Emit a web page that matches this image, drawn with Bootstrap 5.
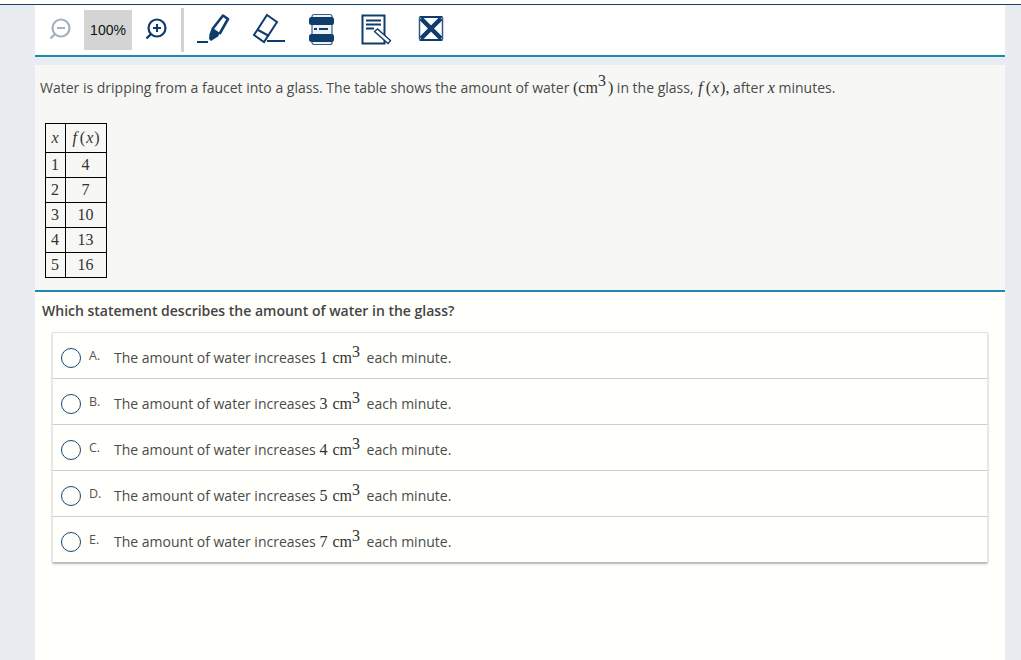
<!DOCTYPE html>
<html lang="en">
<head>
<meta charset="utf-8">
<title>Question</title>
<link rel="stylesheet" href="https://cdn.jsdelivr.net/npm/bootstrap@5.3.0/dist/css/bootstrap.min.css">
<style>
html,body{height:100%;overflow:hidden}
body{background:#e9ecf0;font-family:"Open Sans","Noto Sans",sans-serif;font-size:14px;color:#4a4a4a}
.topstrip{height:5px;background:#fff;border-bottom:1px solid #1d3f62}
.sheet{width:970px;margin-left:35px;height:655px;background:#fffffb}
.toolbar{height:52px;border-bottom:2px solid #1c8bb0;background:#fff;padding-left:12px}
.toolbar svg{flex:none}
.t-zoomval{width:48px;height:40px;margin-left:11px;background:#d4d4d4;color:#111;font-size:14px;font-family:"Liberation Sans",sans-serif}
.t-plus{margin-left:11px}
.sep{width:3px;height:44px;background:#d2d2d2;margin-left:12px}
.t-pen{margin-left:11px}
.t-eraser{margin-left:21px}
.t-reader{margin-left:18px}
.t-notes{margin-left:22px}
.t-close{margin-left:22px}
.gapband{height:8px;background:#e9ecf0}
.passage{height:227px;background:#f7f8f5;border-bottom:2px solid #1c8bb0;padding:13px 5px 0}
.passage p{margin:0;line-height:20px;white-space:nowrap}
.m{font-family:"Liberation Serif",serif;color:#333;font-size:16px}
.m sup{font-size:16px;top:-.375em;line-height:0;vertical-align:baseline;position:relative}
.passage .m sup{top:-.45em}
.fn{padding-left:1px;padding-right:3px}
.vr-x{padding:0 1px}
.after-sup{margin-left:2px}
.ans-math{margin-right:3px;word-spacing:1px}
.ftable{border-collapse:collapse;margin:25px 0 0 5px;font-family:"Liberation Serif",serif;font-size:16px;color:#333}
.ftable td{border:1px solid #000;text-align:center;height:25px;padding:0 1px 0 0;line-height:20px}
.ftable tr:first-child td{height:29px}
.ftable .c1{width:20px}
.ftable .c2{width:41px}
.question{font-weight:600;color:#444;padding:9px 0 0 7px;line-height:20px;margin:0}
.answers{margin:11px 17px 0;border-radius:2px;box-shadow:0 1px 2px rgba(0,0,0,.3)}
.answers .list-group-item{height:46px;padding:5px 0 0 8px;background:#fffffb;border-color:#e4e4e0;border-bottom-width:0;color:#4a4a4a;border-radius:0}
.answers .list-group-item + .list-group-item{border-top:1px solid #cfcfca}
.answers .list-group-item:last-child{height:47px;border-bottom:1px solid #bdbdb8}
.radio{width:20px;height:20px;border:1.5px solid #14477a;border-radius:50%;flex:none}
.letter{width:25px;margin-left:8px;font-size:12.5px;margin-top:-4px;color:#555}
</style>
</head>
<body>
<div class="topstrip"></div>
<div class="sheet">
  <div class="toolbar d-flex align-items-center">
    <svg width="26" height="26" viewBox="0 0 26 26" fill="none" aria-label="Zoom out"><circle cx="14" cy="11" r="8.500" stroke="#a3b3bb" stroke-width="2.200"/><path d="M10 11h8" stroke="#a3b3bb" stroke-width="2"/><path d="M8 17l-4.500 4.500" stroke="#a3b3bb" stroke-width="2.400"/></svg>
    <div class="t-zoomval d-flex align-items-center justify-content-center">100%</div>
    <svg class="t-plus" width="26" height="26" viewBox="0 0 26 26" fill="none" aria-label="Zoom in"><circle cx="14" cy="11" r="8.500" stroke="#0f3d6b" stroke-width="2.200"/><path d="M10 11h8M14 7v8" stroke="#0f3d6b" stroke-width="2"/><path d="M8 17l-4.500 4.500" stroke="#0f3d6b" stroke-width="2.400"/></svg>
    <div class="sep"></div>
    <svg class="t-pen" width="36" height="36" viewBox="0 0 36 36" fill="none" aria-label="Highlighter"><path d="M2 30h11" stroke="#0f3d6b" stroke-width="2"/><path d="M17 15.500l8 5.500-2 3.500-7 4.500-2-2 .5-5z" fill="#0f3d6b"/><path d="M17.500 17L28 3.500l5 3.500-8.500 15" stroke="#0f3d6b" stroke-width="2.600" stroke-linejoin="round"/></svg>
    <svg class="t-eraser" width="36" height="36" viewBox="0 0 36 36" fill="none" aria-label="Eraser"><path d="M15 3l10 7-13 20-10-7z" stroke="#0f3d6b" stroke-width="2"/><path d="M6 18l11 6" stroke="#0f3d6b" stroke-width="2"/><path d="M15 29h18" stroke="#0f3d6b" stroke-width="2"/></svg>
    <svg class="t-reader" width="32" height="36" viewBox="0 0 32 36" aria-label="Line reader"><rect x="6" y="2.500" width="20" height="30" rx="2" fill="#eef2f6" stroke="#3a5f85" stroke-width="1.200"/><rect x="3" y="5" width="25" height="8" rx="2.500" fill="#0f3d6b"/><rect x="3" y="22" width="25" height="8" rx="2.500" fill="#0f3d6b"/><path d="M8 17h3M13 17h9" stroke="#0f3d6b" stroke-width="2"/></svg>
    <svg class="t-notes" width="32" height="36" viewBox="0 0 32 36" fill="none" aria-label="Notes"><rect x="2.500" y="3.500" width="22" height="28" stroke="#0f3d6b" stroke-width="2"/><path d="M6 8.500h15M6 12.500h15M6 16.500h8" stroke="#0f3d6b" stroke-width="1.800"/><path d="M14.500 19.500l3-2.500 13 11.500-2.500 3z" fill="#fff" stroke="#0f3d6b" stroke-width="1.400"/></svg>
    <svg class="t-close" width="32" height="36" viewBox="0 1.500 32 36" fill="none" aria-label="Close tools"><path d="M7 8l20 20M27 8L7 28" stroke="#0f3d6b" stroke-width="4.500"/><path d="M5.500 6.500h23M5.500 29.500h23" stroke="#0f3d6b" stroke-width="2"/><path d="M5.500 7v22M28.500 7v22" stroke="#2f5a85" stroke-width="1.500"/></svg>
  </div>
  <div class="gapband"></div>
  <div class="passage">
    <p>Water is dripping from a faucet into a glass. The table shows the amount of water <span class="m">(cm<sup>3</sup><span class="after-sup">)</span></span> in the glass, <span class="m"><i class="fn">f</i>(<i class="vr-x">x</i>),</span> after <span class="m"><i>x</i></span> minutes.</p>
    <table class="ftable">
      <tr><td class="c1"><i>x</i></td><td class="c2"><i class="fn">f</i>(<i class="vr-x">x</i>)</td></tr>
      <tr><td>1</td><td>4</td></tr>
      <tr><td>2</td><td>7</td></tr>
      <tr><td>3</td><td>10</td></tr>
      <tr><td>4</td><td>13</td></tr>
      <tr><td>5</td><td>16</td></tr>
    </table>
  </div>
  <p class="question">Which statement describes the amount of water in the glass?</p>
  <div class="list-group answers">
    <div class="list-group-item d-flex align-items-center"><span class="radio"></span><span class="letter">A.</span><span>The amount of water increases <span class="m ans-math">1 cm<sup>3</sup></span> each minute.</span></div>
    <div class="list-group-item d-flex align-items-center"><span class="radio"></span><span class="letter">B.</span><span>The amount of water increases <span class="m ans-math">3 cm<sup>3</sup></span> each minute.</span></div>
    <div class="list-group-item d-flex align-items-center"><span class="radio"></span><span class="letter">C.</span><span>The amount of water increases <span class="m ans-math">4 cm<sup>3</sup></span> each minute.</span></div>
    <div class="list-group-item d-flex align-items-center"><span class="radio"></span><span class="letter">D.</span><span>The amount of water increases <span class="m ans-math">5 cm<sup>3</sup></span> each minute.</span></div>
    <div class="list-group-item d-flex align-items-center"><span class="radio"></span><span class="letter">E.</span><span>The amount of water increases <span class="m ans-math">7 cm<sup>3</sup></span> each minute.</span></div>
  </div>
</div>
<script src="https://cdn.jsdelivr.net/npm/bootstrap@5.3.0/dist/js/bootstrap.bundle.min.js"></script>
</body>
</html>
